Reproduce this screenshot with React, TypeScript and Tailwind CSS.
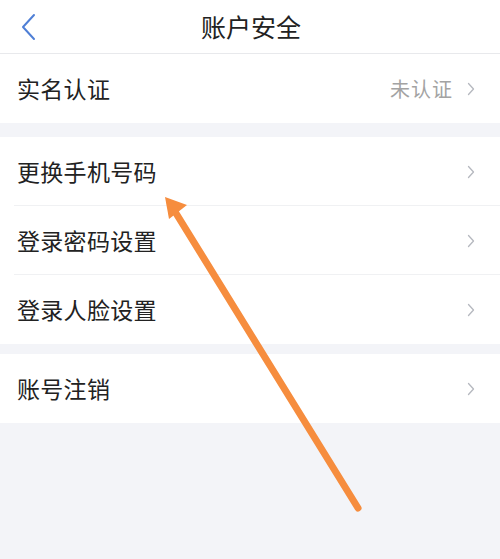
import React from 'react';

const font = { fontFamily: '"Noto Sans CJK SC", "Noto Sans", sans-serif' };

const Chevron: React.FC = () => (
  <svg width="8" height="14" viewBox="0 0 8 14" fill="none" className="shrink-0">
    <path d="M1.5 1.5 L6.5 7 L1.5 12.5" stroke="#b5b8bf" strokeWidth="1.3" strokeLinecap="round" strokeLinejoin="round" />
  </svg>
);

type RowProps = { label: string; value?: string; divider?: boolean };

const Row: React.FC<RowProps> = ({ label, value, divider }) => (
  <div className="relative flex h-[69px] items-center justify-between bg-white pl-[17px] pr-[25px]">
    <span className="text-[23px] tracking-[0.3px] text-[#222]">{label}</span>
    <div className="flex items-center gap-[14px]">
      {value && <span className="text-[20px] tracking-[1px] text-[#a3a3a3]">{value}</span>}
      <Chevron />
    </div>
    {divider && <div className="absolute bottom-0 left-[14px] right-0 h-px bg-[#f0f1f3]" />}
  </div>
);

const App: React.FC = () => {
  return (
    <div className="relative min-h-[559px] w-full overflow-hidden bg-[#f3f4f8]" style={font}>
      {/* Header */}
      <header className="relative flex h-[54px] items-center justify-center border-b border-[#e8e9ec] bg-white">
        <button className="absolute left-[20px] top-[12px]">
          <svg width="18" height="30" viewBox="0 0 18 30" fill="none">
            <path d="M14 3 L3 15 L14 27" stroke="#4f7fd6" strokeWidth="2" strokeLinecap="round" strokeLinejoin="round" />
          </svg>
        </button>
        <h1 className="pl-[2px] text-[25px] text-[#222]">账户安全</h1>
      </header>

      <Row label="实名认证" value="未认证" />

      <div className="mt-[14px]">
        <Row label="更换手机号码" divider />
        <Row label="登录密码设置" divider />
        <Row label="登录人脸设置" />
      </div>

      <div className="mt-[10px]">
        <Row label="账号注销" />
      </div>

      {/* Annotation arrow */}
      <svg className="pointer-events-none absolute left-0 top-0" width="500" height="559" viewBox="0 0 500 559">
        <line x1="358" y1="508" x2="174" y2="210" stroke="#f68d3e" strokeWidth="7" strokeLinecap="round" />
        <polygon points="165,197 187,205 169,219" fill="#f68d3e" />
      </svg>
    </div>
  );
};

export default App;
